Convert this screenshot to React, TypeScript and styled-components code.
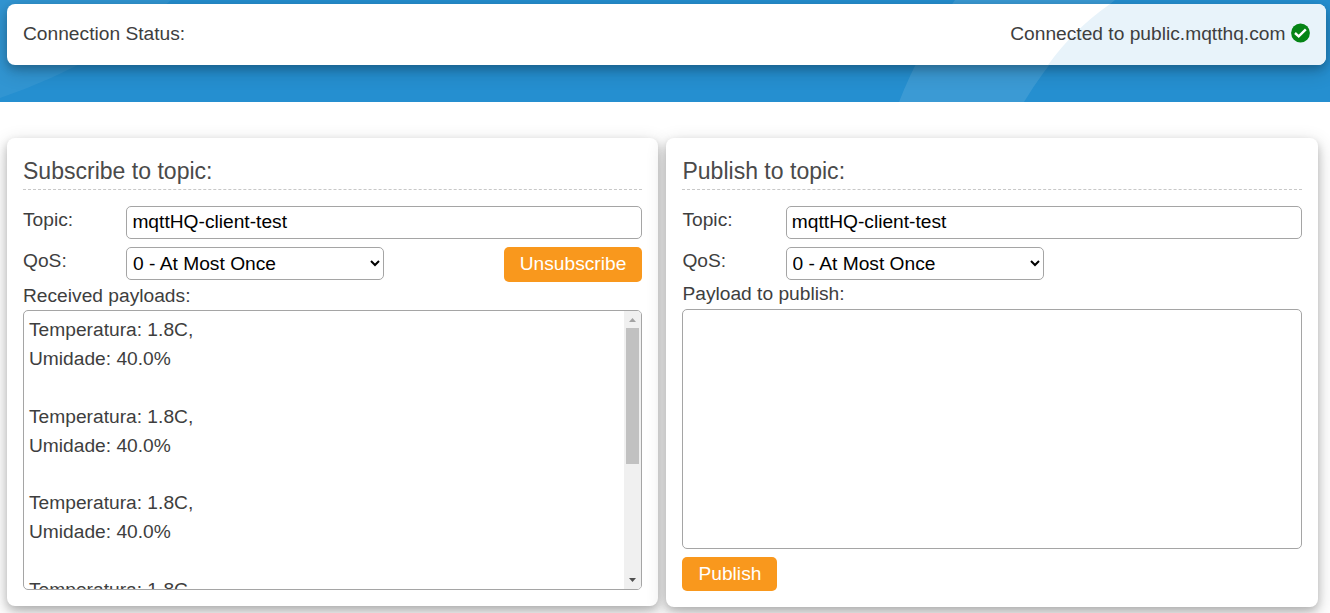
import React from "react";
import styled, { createGlobalStyle } from "styled-components";

const GlobalStyle = createGlobalStyle`
  * { box-sizing: border-box; }
  html, body { margin: 0; background: #fff; }
  body {
    font-family: Arial, "Liberation Sans", sans-serif;
    font-size: 19.2px;
    line-height: 28.8px;
    color: #3e3e3e;
    overflow: hidden;
  }
`;

const Page = styled.div`
  height: 613px;
  overflow: hidden;
`;

const cardShadow = "0 4px 8px 0 rgba(0, 0, 0, 0.2), 0 6px 20px 0 rgba(0, 0, 0, 0.19)";

const Banner = styled.header`
  position: relative;
  height: 102px;
  padding: 4px 4px 0 7px;
  background: #258fd0;
  overflow: hidden;
`;

const BannerArt = styled.svg`
  position: absolute;
  inset: 0;
`;

const StatusCard = styled.div`
  position: relative;
  display: flex;
  justify-content: space-between;
  height: 61px;
  padding: 16px 16px 0;
  border-radius: 8px;
  background: #fff;
  box-shadow: ${cardShadow};
  overflow: hidden;
`;

const CardTint = styled.svg`
  position: absolute;
  top: 0;
  right: 0;
`;

const StatusText = styled.span`
  position: relative;
  display: flex;
  gap: 5.6px;
`;

const StatusIcon = styled.svg`
  margin-top: 3px;
`;

const Columns = styled.main`
  display: grid;
  grid-template-columns: 651px 651.5px;
  gap: 8.45px;
  align-items: start;
  padding: 36px 0 0 7px;
`;

const Card = styled.section<{ $height: number }>`
  display: flex;
  flex-direction: column;
  height: ${(p) => p.$height}px;
  padding: 16px;
  border-radius: 8px;
  background: #fff;
  box-shadow: ${cardShadow};
`;

const Title = styled.h2`
  flex: none;
  height: 36px;
  margin: 0 0 16px;
  border-bottom: 1px dashed #c8c8c8;
  font-size: 23.04px;
  font-weight: 400;
  line-height: 34.5px;
  color: #4a4a4a;
`;

const Field = styled.div<{ $height: number }>`
  display: flex;
  flex: none;
  align-items: flex-start;
  height: ${(p) => p.$height}px;
`;

const Label = styled.label`
  flex: none;
  width: 103.1px;
  line-height: 27px;
`;

const Caption = styled.div<{ $height: number }>`
  flex: none;
  height: ${(p) => p.$height}px;
  line-height: 28px;
`;

const TextInput = styled.input`
  flex: 1;
  min-width: 0;
  height: 33px;
  padding: 0 5px 2px 5.3px;
  border: 1px solid #a5a5a5;
  border-radius: 5px;
  background: #fff;
  font: inherit;
  color: #000;
  outline: none;
`;

const Select = styled.select`
  width: 258px;
  height: 33px;
  padding: 0 3px 0 2px;
  border: 1px solid #a5a5a5;
  border-radius: 5px;
  background: #fff;
  font: inherit;
  color: #000;
`;

const Button = styled.button<{ $width: number; $height: number }>`
  flex: none;
  width: ${(p) => p.$width}px;
  height: ${(p) => p.$height}px;
  padding: 0 0 ${(p) => p.$height - 34}px;
  border: 0;
  border-radius: 5px;
  background: #f9981d;
  color: #fff;
  font: inherit;
  line-height: 34px;
`;

const Spacer = styled.div`
  flex: 1;
`;

const Log = styled.div`
  display: flex;
  flex: none;
  height: 280px;
  border: 1px solid #a5a5a5;
  border-radius: 5px;
  overflow: hidden;
`;

const LogText = styled.pre`
  flex: 1;
  margin: 0;
  padding: 5.4px 5px 0;
  font: inherit;
`;

const Track = styled.div`
  display: flex;
  flex-direction: column;
  align-items: center;
  width: 17px;
  background: #f0f0f0;
`;

const Thumb = styled.div`
  width: 13px;
  height: 136px;
  background: #c1c1c1;
`;

const Arrow = styled.svg`
  flex: none;
`;

const Payload = styled.textarea`
  flex: none;
  height: 240px;
  margin: 0 0 8px;
  padding: 5px;
  border: 1px solid #a5a5a5;
  border-radius: 5px;
  background: #fff;
  font: inherit;
  resize: none;
`;

const entry = "Temperatura: 1.8C,\nUmidade: 40.0%\n\n";

const QosSelect = () => (
  <Select defaultValue="0">
    <option value="0">0 - At Most Once</option>
    <option value="1">1 - At Least Once</option>
    <option value="2">2 - Exactly Once</option>
  </Select>
);

export default function App() {
  return (
    <Page>
      <GlobalStyle />
      <Banner>
        <BannerArt width="1330" height="102" viewBox="0 0 1330 102">
          <path d="M0 0H171Q105 62 0 98Z" fill="#fff" fillOpacity="0.06" />
          <path d="M955 0H1115Q1060 42 1024 102H899Q920 48 955 0Z" fill="#fff" fillOpacity="0.1" />
        </BannerArt>
        <StatusCard>
          <CardTint width="302" height="61" viewBox="0 0 302 61">
            <path d="M86 0Q49 26 24 61H302V0Z" fill="#e8f3fa" />
          </CardTint>
          <StatusText>Connection Status:</StatusText>
          <StatusText>
            Connected to public.mqtthq.com
            <StatusIcon width="19" height="20" viewBox="0 0 19 20">
              <circle cx="9.5" cy="10" r="9.4" fill="#058415" />
              <path d="M4 10L7.7 13.4L14.8 6.3" fill="none" stroke="#fff" strokeWidth="2.4" />
            </StatusIcon>
          </StatusText>
        </StatusCard>
      </Banner>
      <Columns>
        <Card $height={468}>
          <Title>Subscribe to topic:</Title>
          <Field $height={41}>
            <Label>Topic:</Label>
            <TextInput defaultValue="mqttHQ-client-test" />
          </Field>
          <Field $height={35}>
            <Label>QoS:</Label>
            <QosSelect />
            <Spacer />
            <Button $width={138} $height={35}>Unsubscribe</Button>
          </Field>
          <Caption $height={28}>Received payloads:</Caption>
          <Log>
            <LogText>{entry.repeat(4)}</LogText>
            <Track>
              <Arrow width="17" height="17" viewBox="0 0 17 17">
                <path d="M5 11L8.5 7L12 11Z" fill="#a3a3a3" />
              </Arrow>
              <Thumb />
              <Spacer />
              <Arrow width="17" height="17" viewBox="0 0 17 17">
                <path d="M5 6L8.5 10L12 6Z" fill="#505050" />
              </Arrow>
            </Track>
          </Log>
        </Card>
        <Card $height={469}>
          <Title>Publish to topic:</Title>
          <Field $height={41}>
            <Label>Topic:</Label>
            <TextInput defaultValue="mqttHQ-client-test" />
          </Field>
          <Field $height={33}>
            <Label>QoS:</Label>
            <QosSelect />
          </Field>
          <Caption $height={29}>Payload to publish:</Caption>
          <Payload />
          <Button $width={95} $height={34}>Publish</Button>
        </Card>
      </Columns>
    </Page>
  );
}
